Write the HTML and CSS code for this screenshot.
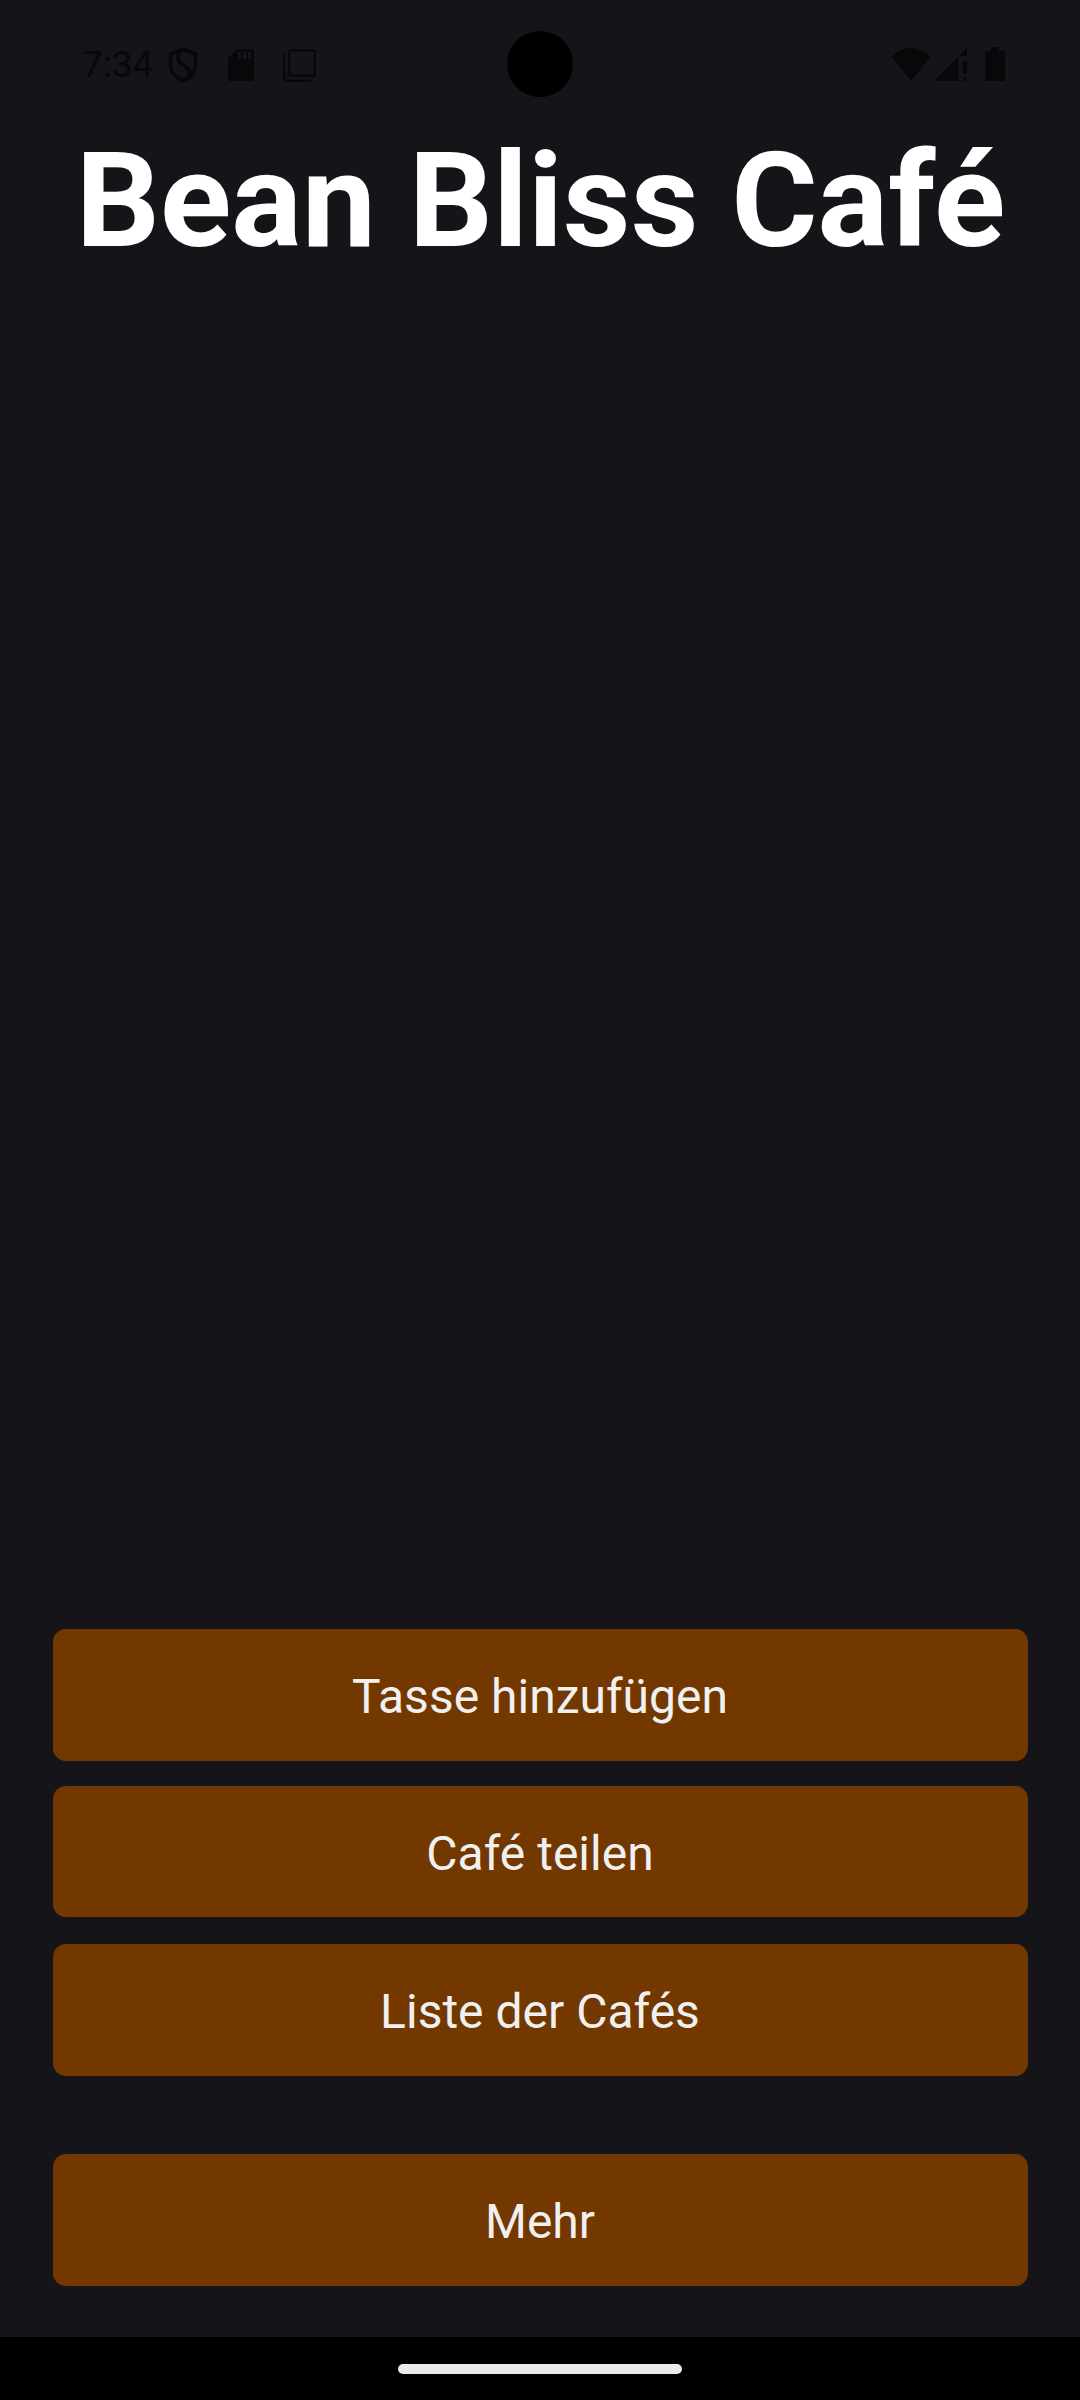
FILE: index.html
```html
<!DOCTYPE html>
<html lang="de">
<head>
<meta charset="utf-8">
<title>Bean Bliss Café</title>
<link rel="stylesheet" href="styles.css">
</head>
<body>
<div class="screen">
  <header class="status">
    <span class="clock">7:34</span>
    <svg class="shield" width="30" height="36" viewBox="0 0 30 36" fill="none" stroke="currentColor" stroke-width="3.600">
      <path d="M15 2.300 27.500 7V17C27.500 25 22 31 15 33.700 8 31 2.500 25 2.500 17V7Z" stroke-linejoin="round"/>
      <path d="M11 4C8 12 11 15 16 18.500 22 22.500 23 26 20 31"/>
    </svg>
    <svg class="sdcard" width="26" height="32" viewBox="0 0 26 32" fill="currentColor">
      <path fill-rule="evenodd" d="M9.500 0H24Q26 0 26 2V30Q26 32 24 32H2Q0 32 0 30V9.500ZM10 3V10H13V3ZM15 3V10H18V3ZM20 3V10H23V3Z"/>
    </svg>
    <svg class="windows" width="33" height="33" viewBox="0 0 33 33" fill="none" stroke="currentColor" stroke-width="2.400">
      <rect x="6.300" y="1.200" width="25.500" height="25.500" rx="1.500"/>
      <path d="M1.200 5V30Q1.200 31.800 3 31.800H28"/>
    </svg>
    <span class="camera"></span>
    <svg class="wifi" width="40" height="33" viewBox="0 0 40 33" fill="currentColor">
      <path d="M20 33 .5 8.500Q9 0 20 0T39.500 8.500Z"/>
    </svg>
    <svg class="signal" width="33" height="33" viewBox="0 0 33 33" fill="currentColor">
      <path d="M0 33 24.500 8.500V33ZM25 8 33 0V8ZM29 13H33V26H29ZM29 29H33V33H29Z"/>
    </svg>
    <svg class="battery" width="20" height="34" viewBox="0 0 20 34" fill="currentColor">
      <path d="M6 0H14V4H18Q20 4 20 6V32Q20 34 18 34H2Q0 34 0 32V6Q0 4 2 4H6Z"/>
    </svg>
  </header>
  <main class="content">
    <h1 class="title">Bean Bliss Café</h1>
    <div class="actions">
      <button class="btn">Tasse hinzufügen</button>
      <button class="btn share">Café teilen</button>
      <button class="btn list">Liste der Cafés</button>
      <button class="btn more">Mehr</button>
    </div>
  </main>
  <footer class="nav"><span class="handle"></span></footer>
</div>
</body>
</html>
```
FILE: styles.css
```css
* { box-sizing: border-box; }
body { margin: 0; background: #151419; font-family: Roboto, sans-serif; }
.screen { width: 1080px; height: 2400px; display: flex; flex-direction: column; background: #151419; overflow: hidden; }
.status { position: relative; height: 128px; flex: none; display: flex; align-items: center; padding: 0 75px 0 82px; color: #08080a; }
.status svg { flex: none; display: block; }
.clock { width: 86px; margin-top: 2px; font-size: 37px; line-height: 44px; white-space: nowrap; }
.shield { margin-top: 2px; }
.sdcard { margin-left: 30px; margin-top: 2px; }
.windows { margin-left: 28.500px; margin-top: 2px; }
.camera { position: absolute; left: 507px; top: 31px; width: 66px; height: 66px; border-radius: 50%; background: #000; }
.wifi { margin-left: auto; }
.signal { margin-left: 3px; }
.battery { margin-left: 18px; }
.content { flex: 1; min-height: 0; display: flex; flex-direction: column; justify-content: space-between; padding: 0 52px 51px 53px; }
.title { margin: -5px 0 0; font-size: 132px; line-height: 156px; font-weight: 700; color: #fff; text-align: center; white-space: nowrap; }
.actions { display: flex; flex-direction: column; }
.btn { height: 132px; padding: 3px 1px 0 0; border: 0; border-radius: 13px; background: #723800; color: #f0f0f0; font: 400 48px/56px Roboto, sans-serif; }
.share { height: 131px; margin-top: 25px; padding-top: 4px; }
.list { margin-top: 27px; }
.more { margin-top: 78px; }
.nav { flex: none; height: 63px; background: #000; display: flex; justify-content: center; padding-top: 27px; }
.handle { width: 284px; height: 10px; border-radius: 5px; background: #ebebeb; }
```
